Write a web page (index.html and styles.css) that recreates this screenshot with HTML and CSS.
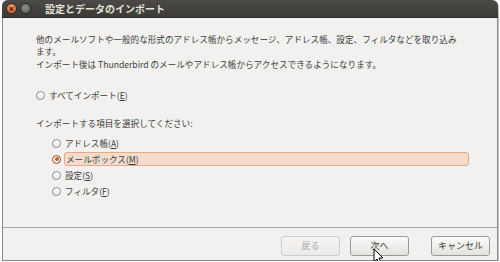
FILE: index.html
```
<!DOCTYPE html>
<html lang="ja">
<head>
    <meta charset="UTF-8">
    <title>設定とデータのインポート</title>
    <link rel="stylesheet" href="styles.css">
</head>
<body>
    <div class="window">
        <div class="titlebar">
            <span class="wbtn close">
                <svg width="10" height="10" viewBox="0 0 10 10"><path d="M3 3L7 7M7 3L3 7" stroke="#4a2a1a" stroke-width="1.4"/></svg>
            </span>
            <span class="wbtn mini"></span>
            <span class="title">設定とデータのインポート</span>
        </div>
        <div class="content">
            <p class="intro">他のメールソフトや一般的な形式のアドレス帳からメッセージ、アドレス帳、設定、フィルタなどを取り込みます。</p>
            <p class="intro second">インポート後は Thunderbird のメールやアドレス帳からアクセスできるようになります。</p>

            <div class="radio all"><span class="dot"></span><span>すべてインポート(<u>E</u>)</span></div>

            <p class="label">インポートする項目を選択してください:</p>
            <div class="items">
                <div class="radio"><span class="dot"></span><span>アドレス帳(<u>A</u>)</span></div>
                <div class="radio checked"><span class="dot"></span><span class="focus">メールボックス(<u>M</u>)</span></div>
                <div class="radio"><span class="dot"></span><span>設定(<u>S</u>)</span></div>
                <div class="radio"><span class="dot"></span><span>フィルタ(<u>F</u>)</span></div>
            </div>
        </div>
        <div class="footer">
            <button class="btn" disabled>戻る</button>
            <button class="btn">次へ</button>
            <button class="btn cancel">キャンセル</button>
            <svg class="cursor" width="12" height="18" viewBox="0 0 12 18"><path d="M1 1L1 14L4 11L6.5 16.5L8.5 15.5L6 10L10 10Z" fill="#fff" stroke="#000" stroke-width="1"/></svg>
        </div>
    </div>
</body>
</html>
```

FILE: styles.css
```
*{
    margin:0;
    padding:0;
    box-sizing:border-box;
}
body{
    background:#fff;
    font-family:"Noto Sans CJK JP","Liberation Sans",sans-serif;
    font-size:8.6px;
    color:#3c3c3c;
}
.window{
    width:496px;
    height:261px;
    margin-left:2px;
    background:#f2f1f0;
    border:1px solid #8a8987;
    border-top:none;
    border-radius:6px 6px 0 0;
    display:flex;
    flex-direction:column;
    box-shadow:1px 1px 1px rgba(0,0,0,.25);
}
.titlebar{
    height:18px;
    background:linear-gradient(#4a4945,#3c3b37);
    border-radius:6px 6px 0 0;
    border-bottom:1px solid #2b2a27;
    display:flex;
    align-items:center;
    padding-left:4px;
    margin:0 -1px;
}
.wbtn{
    width:11px;
    height:11px;
    border-radius:50%;
    display:flex;
    align-items:center;
    justify-content:center;
    margin-right:3px;
}
.close{
    background:radial-gradient(circle at 50% 35%,#f69a6c,#e3571e);
    border:1px solid #2a2926;
}
.mini{
    background:radial-gradient(circle at 50% 35%,#8c8a84,#5f5d58);
    border:1px solid #2a2926;
}
.title{
    margin-left:11px;
    color:#e6e2d9;
    font-weight:bold;
    font-size:10px;
}
.content{
    flex:1;
    padding:15px 0 0 33px;
}
.intro{
    width:424px;
    line-height:12px;
}
.intro.second{
    margin-top:1px;
}
.radio{
    display:flex;
    align-items:center;
    height:16px;
}
.radio.all{
    margin-top:17px;
}
.dot{
    width:9px;
    height:9px;
    border:1px solid #8c8a86;
    border-radius:50%;
    background:linear-gradient(#ffffff,#e9e8e6);
    margin:0 4px 0 0;
    display:flex;
    align-items:center;
    justify-content:center;
}
.checked .dot{
    border-color:#a34d22;
}
.checked .dot::after{
    content:"";
    width:4px;
    height:4px;
    border-radius:50%;
    background:#e0561b;
}
.label{
    margin-top:13px;
    line-height:14px;
}
.items{
    margin-top:5px;
    padding-left:16px;
}
.focus{
    width:405px;
    height:14px;
    line-height:13px;
    background:#f4dccd;
    border:1px solid #e6a98c;
    border-radius:3px;
    padding-left:1px;
    margin-left:-1px;
}
u{
    text-decoration-thickness:1px;
}
.footer{
    border-top:1px solid #a7a6a3;
    height:33px;
    display:flex;
    justify-content:flex-end;
    align-items:center;
    padding:3px 7px 0 0;
    position:relative;
}
.btn{
    font-family:inherit;
    font-size:9px;
    width:59px;
    height:20px;
    border:1px solid #9b9a97;
    border-radius:3px;
    background:linear-gradient(#fbfbfa,#e3e2df);
    color:#3c3c3c;
    margin-left:10px;
}
.btn:disabled{
    border-color:#cfcecb;
    color:#a8a7a4;
    background:linear-gradient(#f5f4f3,#ecebe9);
}
.btn.cancel{
    margin-left:22px;
}
.cursor{
    position:absolute;
    left:370px;
    top:20px;
}
```
